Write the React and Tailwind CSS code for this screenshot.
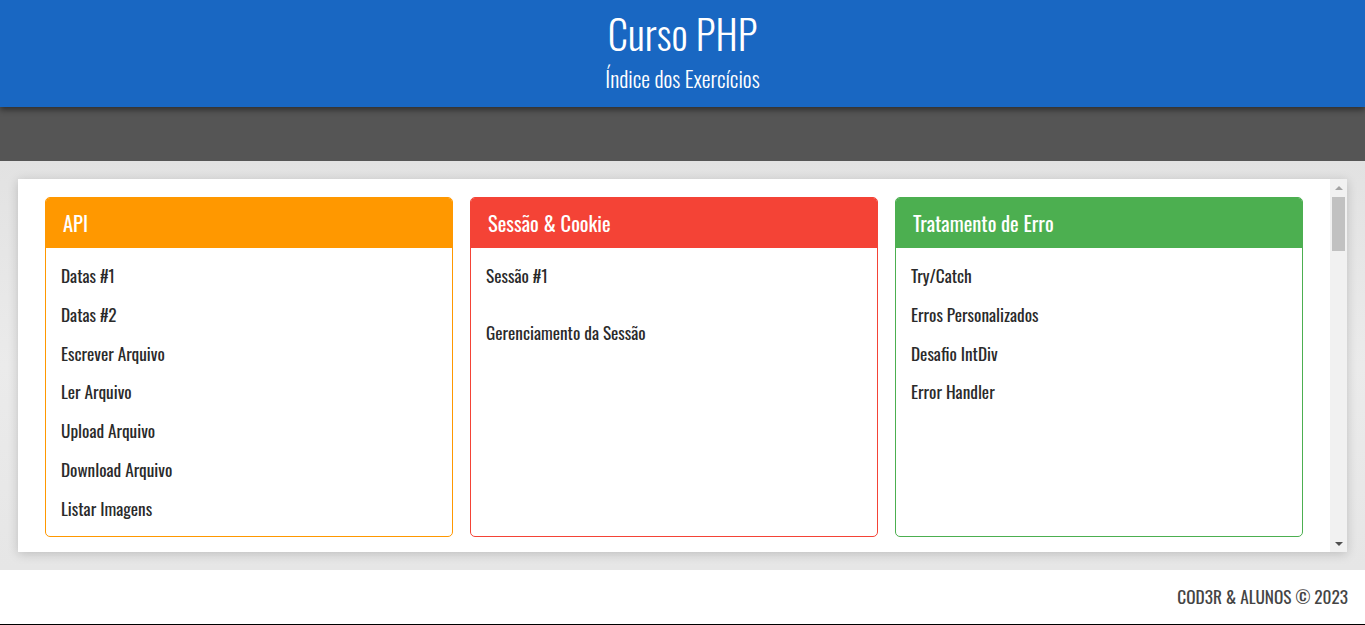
import React from 'react';

const cards = [
  {
    title: 'API',
    color: 'bg-[#ff9800]',
    border: 'border-[#ff9800]',
    items: ['Datas #1', 'Datas #2', 'Escrever Arquivo', 'Ler Arquivo', 'Upload Arquivo', 'Download Arquivo', 'Listar Imagens'],
  },
  {
    title: 'Sessão & Cookie',
    color: 'bg-[#f44336]',
    border: 'border-[#f44336]',
    items: ['Sessão #1', '', 'Gerenciamento da Sessão'],
  },
  {
    title: 'Tratamento de Erro',
    color: 'bg-[#4caf50]',
    border: 'border-[#4caf50]',
    items: ['Try/Catch', 'Erros Personalizados', 'Desafio IntDiv', 'Error Handler'],
  },
];

const font = "font-['Oswald','Liberation_Sans_Narrow','DejaVu_Sans_Condensed','Roboto_Condensed',sans-serif]";

const Card = ({ card }) => (
  <div className={`h-[340px] rounded-[5px] border ${card.border} bg-white overflow-hidden`}>
    <div className={`${card.color} h-[50px] flex items-center px-[17px]`}>
      <h2 className="text-white text-[20.5px]">{card.title}</h2>
    </div>
    <ul className="px-[15px] pt-[9px]">
      {card.items.map((item, i) =>
        item === '' ? (
          <li key={i} className="h-[18px]" />
        ) : (
          <li key={i} className="h-[38.7px] flex items-center text-[17.3px] text-[#2a2a2a]">
            {item}
          </li>
        )
      )}
    </ul>
  </div>
);

const Scrollbar = () => (
  <div className="w-[17px] shrink-0 bg-[#f1f1f1] flex flex-col items-center">
    <div className="h-[17px] flex items-center justify-center">
      <svg width="8" height="4" viewBox="0 0 8 4"><path d="M0 4 L4 0 L8 4 Z" fill="#a3a3a3" /></svg>
    </div>
    <div className="w-[13px] h-[54px] mt-[1px] bg-[#c1c1c1]" />
    <div className="flex-1" />
    <div className="h-[17px] flex items-center justify-center">
      <svg width="8" height="4" viewBox="0 0 8 4"><path d="M0 0 L8 0 L4 4 Z" fill="#505050" /></svg>
    </div>
  </div>
);

const App = () => {
  return (
    <div className={`h-screen flex flex-col bg-[#e8e8e8] ${font}`}>
      {/* Cabeçalho */}
      <header className="relative z-10 h-[107px] bg-[#1967c2] text-white flex flex-col items-center shadow-[0_3px_6px_rgba(0,0,0,0.45)]">
        <h1 className="text-[40.5px] font-light leading-none mt-[13px]">Curso PHP</h1>
        <h2 className="text-[22px] font-light leading-none mt-[13px]">Índice dos Exercícios</h2>
      </header>
      <div className="h-[54px] bg-[#555555]" />

      {/* Conteúdo */}
      <main className="flex-1 min-h-0 p-[18px] bg-gradient-to-b from-[#e2e2e2] via-[#ebebeb] to-[#e6e6e6]">
        <div className="h-full bg-white flex shadow-[0_2px_10px_rgba(0,0,0,0.18)]">
          <div className="flex-1 overflow-hidden">
            <div className="pl-[27px] pr-[27px] pt-[18px] grid grid-cols-3 gap-[17px]">
              {cards.map((card) => (
                <Card key={card.title} card={card} />
              ))}
            </div>
          </div>
          <Scrollbar />
        </div>
      </main>

      {/* Rodapé */}
      <footer className="h-[55px] bg-white flex items-center justify-end pr-[17px] border-b border-black">
        <span className="text-[17.3px] text-[#444]">COD3R &amp; ALUNOS © 2023</span>
      </footer>
    </div>
  );
};

export default App;
